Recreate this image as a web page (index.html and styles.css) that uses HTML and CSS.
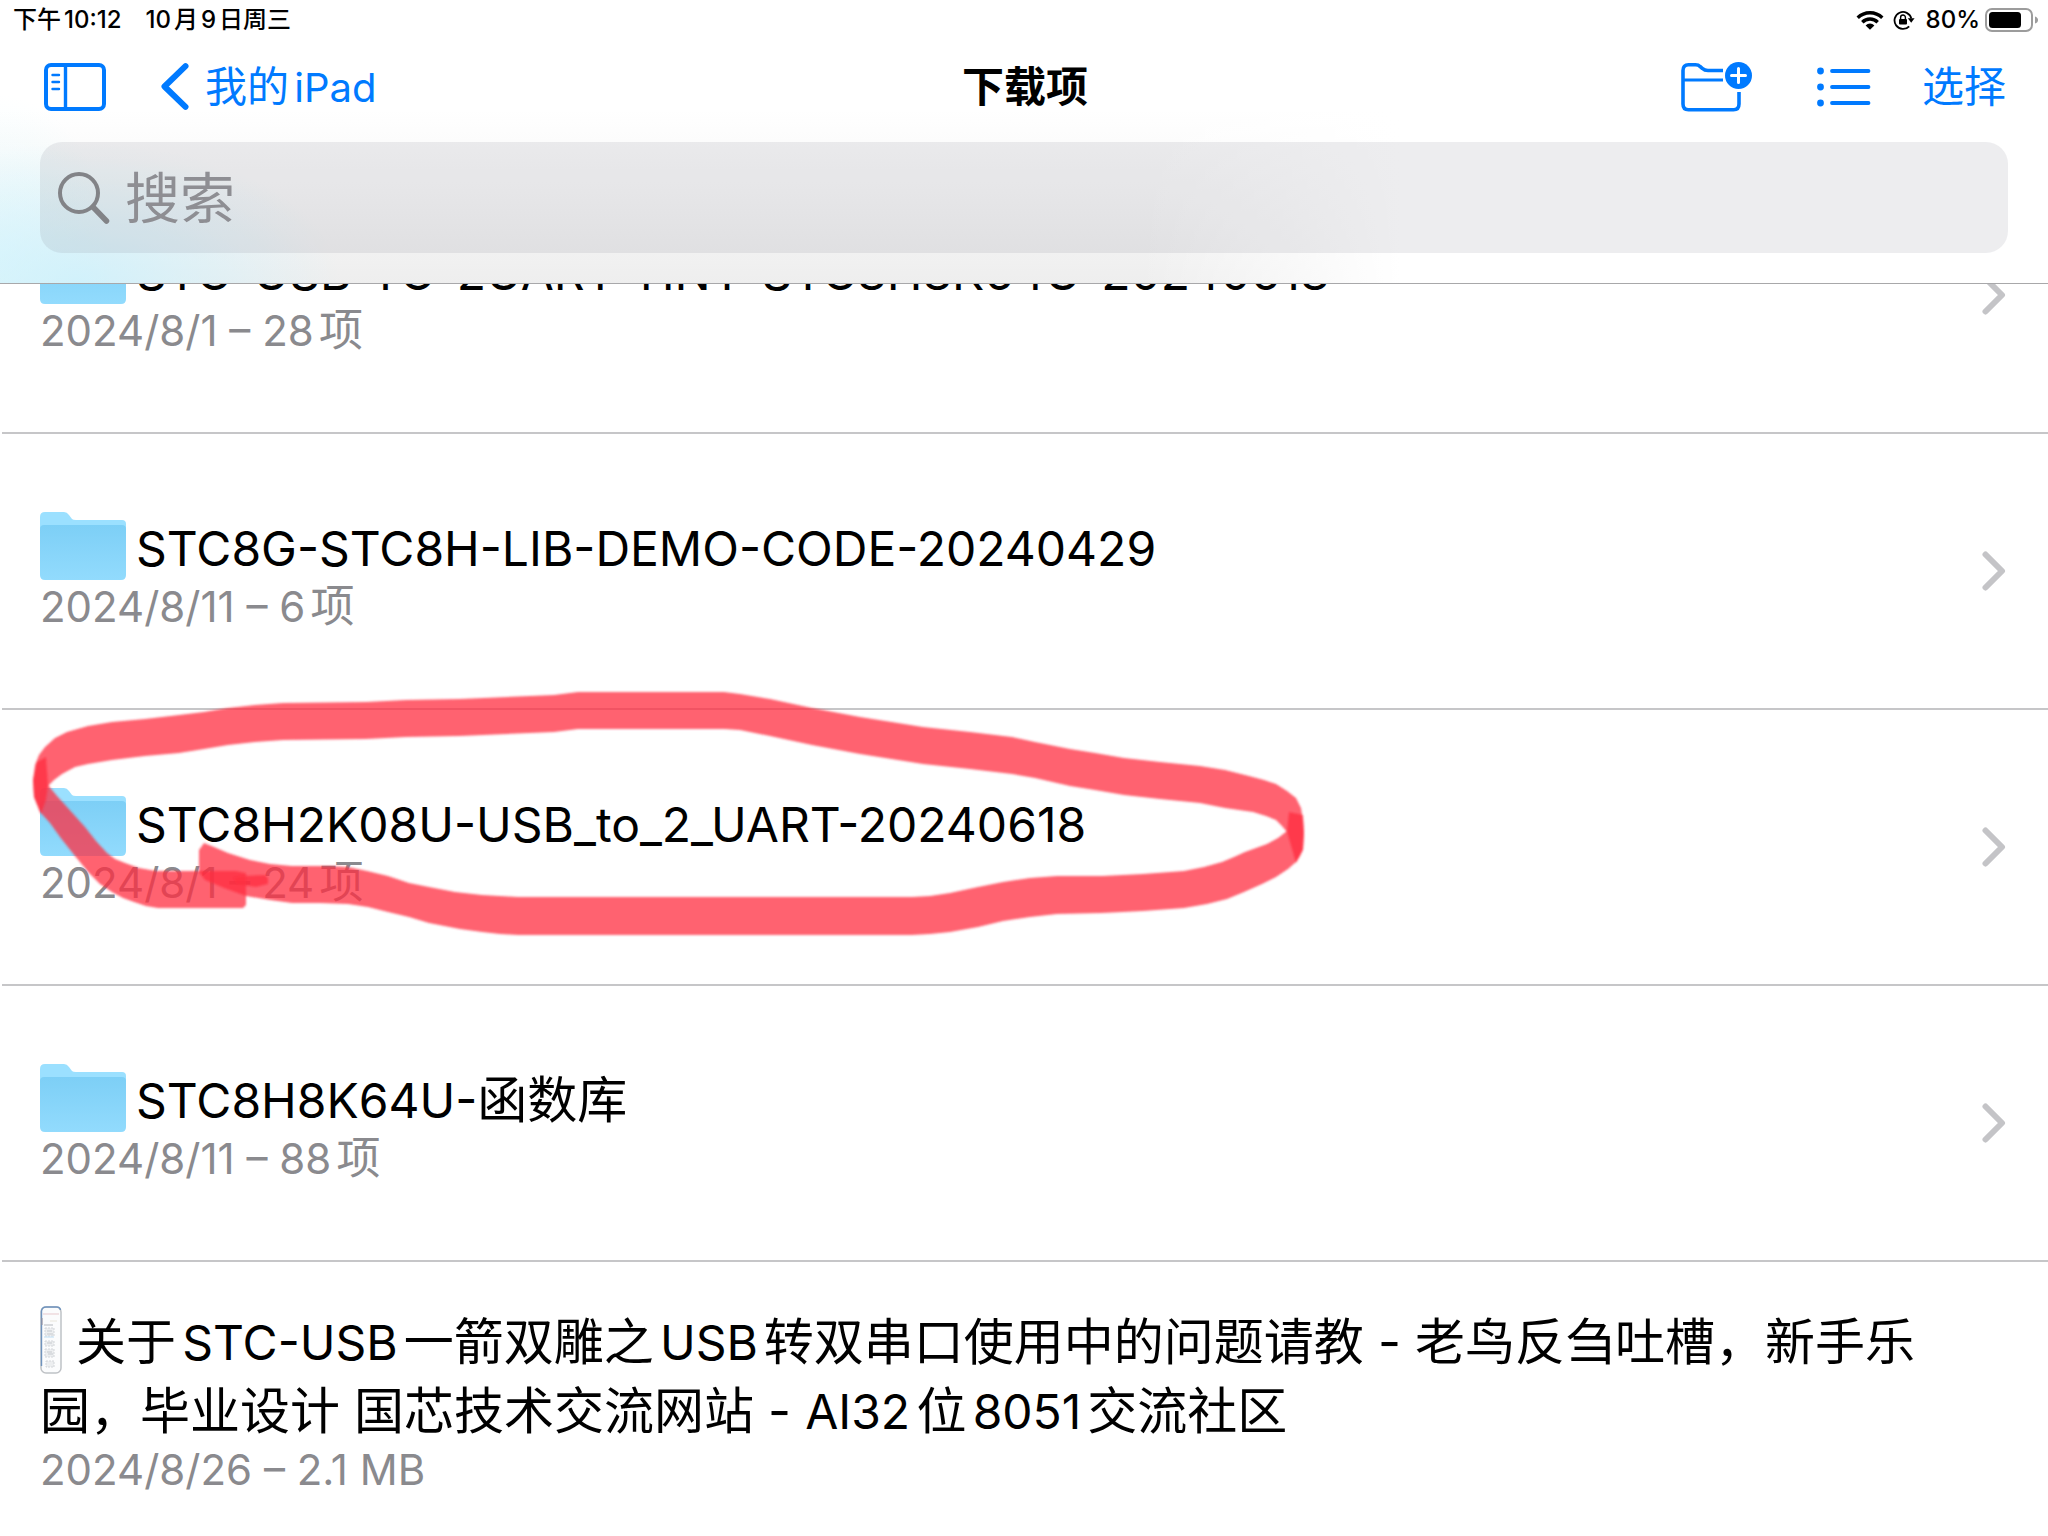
FILE: index.html
```html
<!DOCTYPE html>
<html lang="zh-CN">
<head>
<meta charset="utf-8">
<meta name="viewport" content="width=device-width, initial-scale=1">
<title>下载项</title>
<link rel="stylesheet" href="styles.css">
</head>
<body>
<svg class="symbols" aria-hidden="true">
  <defs>
    <linearGradient id="folder-front" x1="0" y1="0" x2="0" y2="1">
      <stop offset="0" stop-color="#7dcff6"/>
      <stop offset="1" stop-color="#92dbfd"/>
    </linearGradient>
    <symbol id="folder" viewBox="0 0 86 68">
      <path d="M5 0H24Q27 0 29 3L32 7Q33 8 36 8H82Q86 8 86 12V30H0V5Q0 0 5 0Z" fill="#9be0ff"/>
      <path d="M4 13H82Q86 13 86 17V63Q86 68 81 68H5Q0 68 0 63V17Q0 13 4 13Z" fill="url(#folder-front)"/>
    </symbol>
    <symbol id="chevron" viewBox="0 0 24 40">
      <path d="M3.500 3.500L20 20L3.500 36.500" fill="none" stroke="#c4c4c7" stroke-width="6" stroke-linecap="round" stroke-linejoin="round"/>
    </symbol>
  </defs>
</svg>

<header class="topbar">
  <div class="status">
    <div class="status-left"><span>下午10:12</span><span>10月9日周三</span></div>
    <div class="status-right">
      <svg width="28" height="20" viewBox="0 0 28 20" aria-hidden="true">
        <g fill="none" stroke="#000" stroke-width="3.400">
          <path d="M1.700 7.800A17.500 17.500 0 0 1 26.300 7.800"/>
          <path d="M6.300 12.200A11 11 0 0 1 21.700 12.200"/>
        </g>
        <path d="M14 19.800L9.600 15.400A6.300 6.300 0 0 1 18.400 15.400Z"/>
      </svg>
      <svg class="lock" width="22" height="20" viewBox="0 0 22 20" aria-hidden="true">
        <path d="M16.200 16.300A8.500 8.500 0 1 1 18.300 8.500" fill="none" stroke="#000" stroke-width="1.800"/>
        <path d="M14.800 8.200H21.600L18.200 12.800Z"/>
        <rect x="6" y="9" width="8" height="5.600" rx="1"/>
        <path d="M7.600 9.500V7.400a2.400 2.400 0 0 1 4.800 0V9.500" fill="none" stroke="#000" stroke-width="1.400"/>
      </svg>
      <span>80%</span>
      <svg width="53" height="24" viewBox="0 0 53 24" aria-hidden="true">
        <rect x="1" y="1" width="46" height="22" rx="6" fill="none" stroke="#9c9c9c" stroke-width="2"/>
        <rect x="4" y="4" width="32" height="16" rx="3.500"/>
        <path d="M50 8.500Q53 9.500 53 12T50 15.500Z" fill="#9c9c9c"/>
      </svg>
    </div>
  </div>

  <nav class="nav">
    <div class="nav-side">
      <button class="icon-button" type="button" aria-label="边栏">
        <svg width="62" height="48" viewBox="0 0 62 48" fill="none" stroke="#007aff">
          <rect x="2" y="2" width="58" height="44" rx="5" stroke-width="4"/>
          <path d="M21.500 2V46" stroke-width="3.400"/>
          <path d="M8.500 12H15M8.500 19H15M8.500 26H15" stroke-width="2.400" stroke-linecap="round"/>
        </svg>
      </button>
      <a class="back" href="#">
        <svg width="28" height="47" viewBox="0 0 28 47" fill="none" stroke="#007aff" stroke-width="6" stroke-linecap="round" stroke-linejoin="round"><path d="M24.500 3.200L3.500 23.500L24.500 43.800"/></svg>
        <span>我的<span class="latin">iPad</span></span>
      </a>
    </div>
    <h1 class="title">下载项</h1>
    <div class="nav-side nav-end">
      <button class="icon-button new-folder" type="button" aria-label="新建文件夹">
        <svg width="72" height="50" viewBox="0 0 72 50" fill="none" stroke="#007aff" stroke-width="3.600">
          <path d="M42 8.500H27Q23.500 8.500 21.500 6.500L19 4.400Q17.500 2.800 14.500 2.800H7.500Q2 2.800 2 8.500V42Q2 47.800 7.500 47.800H52.500Q58 47.800 58 42V30"/>
          <path d="M2 18H42" stroke-width="3"/>
          <circle cx="57.500" cy="13.500" r="13.500" fill="#007aff" stroke="none"/>
          <path d="M57.500 6.500V20.500M50.500 13.500H64.500" stroke="#fff" stroke-width="3" stroke-linecap="round"/>
        </svg>
      </button>
      <button class="icon-button list-view" type="button" aria-label="列表">
        <svg width="54" height="40" viewBox="0 0 54 40">
          <g fill="#007aff"><circle cx="3.500" cy="4" r="3.400"/><circle cx="3.500" cy="20" r="3.400"/><circle cx="3.500" cy="36" r="3.400"/></g>
          <path d="M15 4H51.500M15 20H51.500M15 36H51.500" stroke="#007aff" stroke-width="3.800" stroke-linecap="round"/>
        </svg>
      </button>
      <button class="text-button" type="button">选择</button>
    </div>
  </nav>

  <form class="search" role="search">
    <svg width="52" height="52" viewBox="0 0 52 52" fill="none" stroke="#828387" aria-hidden="true">
      <circle cx="21" cy="21" r="19" stroke-width="4"/>
      <path d="M35 35L48.500 49" stroke-width="5.500" stroke-linecap="round"/>
    </svg>
    <input type="search" placeholder="搜索" aria-label="搜索">
  </form>
</header>

<main>
  <ul class="files">
    <li class="row">
      <a class="entry" href="#">
        <span class="info">
          <span class="name"><svg class="thumb" width="86" height="68"><use href="#folder"/></svg><span class="latin">STC-USB-TO-2UART-TINY-STC8H8K64U-20240618</span></span>
          <span class="meta"><span class="latin">2024/8/1 – 28</span>项</span>
        </span>
        <svg class="chevron" width="24" height="40"><use href="#chevron"/></svg>
      </a>
    </li>
    <li class="row">
      <a class="entry" href="#">
        <span class="info">
          <span class="name"><svg class="thumb" width="86" height="68"><use href="#folder"/></svg><span class="latin">STC8G-STC8H-LIB-DEMO-CODE-20240429</span></span>
          <span class="meta"><span class="latin">2024/8/11 – 6</span>项</span>
        </span>
        <svg class="chevron" width="24" height="40"><use href="#chevron"/></svg>
      </a>
    </li>
    <li class="row">
      <a class="entry" href="#">
        <span class="info">
          <span class="name"><svg class="thumb" width="86" height="68"><use href="#folder"/></svg><span class="latin">STC8H2K08U-USB_to_2_UART-20240618</span></span>
          <span class="meta"><span class="latin">2024/8/1 – 24</span>项</span>
        </span>
        <svg class="chevron" width="24" height="40"><use href="#chevron"/></svg>
      </a>
      <svg class="marker" width="1320" height="260" viewBox="0 680 1320 260" aria-hidden="true">
        <defs>
          <filter id="soft-edge" x="-2%" y="-5%" width="104%" height="110%"><feGaussianBlur stdDeviation="1"/></filter>
        </defs>
        <g fill="#ff2f40" fill-opacity=".75" filter="url(#soft-edge)">
          <path d="M41 814L34 797L33 780L35 765L39 755L45 747L55 738L67 732L88 726L112 722L145 719L179 715L204 712L228 708L255 705L283 703L366 702L406 700L460 699L554 695L578 692L724 692L740 694L770 699L812 708L860 717L923 727L970 732L1012 737L1035 742L1070 749L1095 753L1124 758L1160 762L1200 766L1225 770L1249 776L1264 780L1276 784L1287 791L1296 798L1301 808L1303 820L1304 833L1303 850L1296 863L1287 832L1282 826L1276 820L1266 816L1253 812L1225 808L1200 803L1160 799L1124 795L1095 790L1070 786L1035 778L1012 774L970 769L923 764L860 754L812 745L770 736L740 730L724 729L578 729L554 732L460 736L406 737L366 739L283 740L255 742L228 745L204 749L179 753L145 756L112 760L88 764L75 767L62 774L54 780L48 786L46 800Z"/>
          <path d="M46 757L48 785L57 796L67 807L76 817L85 827L96 841L107 853L115 859L125 863L139 868L156 871L236 871L246 873V905L243 908L158 908L146 906L134 902L123 898L112 892L100 884L89 873L75 856L60 837L50 823L40 812L34 797L33 780L37 762Z"/>
          <path d="M1289 812L1303 815L1304 833L1303 849L1300 856L1296 862L1288 869L1276 877L1262 884L1244 892L1227 899L1207 904L1184 908L1143 911L1102 913L1057 914L1030 917L1003 921L978 927L950 932L930 934L912 935L518 935L500 934L482 932L460 929L429 923L409 917L388 912L368 907L348 904L320 903L292 903L270 900L246 896L224 888L205 880L199 872L199 850L204 843L214 847L228 853L250 860L270 864L292 866L330 866L348 867L367 871L388 876L409 883L429 887L455 892L482 895L518 897L912 897L930 896L950 893L978 887L1003 882L1030 878L1057 876L1102 876L1143 874L1184 871L1204 867L1222 862L1234 857L1245 852L1267 844L1278 838L1287 831Z"/>
          <path d="M233 877L242 876L265 875L268 878V884L256 887L236 884Z"/>
        </g>
      </svg>
    </li>
    <li class="row">
      <a class="entry" href="#">
        <span class="info">
          <span class="name"><svg class="thumb" width="86" height="68"><use href="#folder"/></svg><span class="latin">STC8H8K64U-</span>函数库</span>
          <span class="meta"><span class="latin">2024/8/11 – 88</span>项</span>
        </span>
        <svg class="chevron" width="24" height="40"><use href="#chevron"/></svg>
      </a>
    </li>
    <li class="row">
      <a class="entry" href="#">
        <span class="info">
          <span class="name"><svg class="thumb thumb-doc" width="22" height="68" viewBox="0 0 22 68"><rect x="1" y="1" width="20" height="66" rx="5" fill="#fbfcfd" stroke="#bfc2c6" stroke-width="1.500"/><path d="M1.500 60V5Q2 1 6 1H17Q20 1 20.500 4" fill="none" stroke="#6f93bd" stroke-width="1.400"/><path d="M3 8H19" stroke="#e7c9cd"/><path d="M2 12V19" stroke="#9a8f98"/><path d="M10 15H17" stroke="#e9e6dc"/><path d="M4 19H13" stroke="#b4b8be"/><path d="M5 22H14V30H5ZM5 35H14V40H5ZM5 43H14V51H5ZM6 55H14V61H6Z" fill="#eceef0" stroke="#d3d6da" stroke-dasharray="2 1"/><path d="M7 25H12M7 28H13M7 37H12M7 46H12M8 48H13" stroke="#c6cacf"/><path d="M4 31H14" stroke="#bcdcf3"/></svg>关于<span class="latin">STC-USB</span>一箭双雕之<span class="latin">USB</span>转双串口使用中的问题请教 - 老鸟反刍吐槽，新手乐<wbr>园，毕业设计 国芯技术交流网站 - <span class="latin">AI32</span>位<span class="latin">8051</span>交流社区</span>
          <span class="meta"><span class="latin">2024/8/26 – 2.1 MB</span></span>
        </span>
      </a>
    </li>
  </ul>
</main>
</body>
</html>
```
FILE: styles.css
```css
* {
  box-sizing: border-box;
}

body {
  margin: 0;
  min-height: 100vh;
  overflow: hidden;
  background: #fff;
  color: #000;
  font-family: Inter, "Noto Sans CJK SC", sans-serif;
  line-height: 1.2;
  text-autospace: normal;
}

svg {
  display: block;
  flex: none;
}

button {
  padding: 0;
  border: 0;
  background: none;
  font: inherit;
  color: #007aff;
}

a {
  color: inherit;
  text-decoration: none;
}

.symbols {
  position: absolute;
  width: 0;
  height: 0;
}

/* Top bar: status line, navigation, search */
.topbar {
  position: sticky;
  top: 0;
  z-index: 2;
  padding-bottom: 30px;
  border-bottom: 1px solid #a8a8aa;
  background:
    radial-gradient(ellipse 260px 140px at 80px 100%, rgba(200, 242, 255, .75), rgba(200, 242, 255, 0)),
    radial-gradient(ellipse 110px 160px at 0 90%, rgba(222, 250, 255, .6), rgba(222, 250, 255, 0)),
    linear-gradient(to right, rgba(255, 255, 255, 0) 1140px, #fff 1400px),
    linear-gradient(to bottom, #fff 110px, #eee 100%);
}

.status {
  display: flex;
  justify-content: space-between;
  align-items: center;
  height: 40px;
  padding: 0 10px 0 13px;
  font-size: 24px;
  font-weight: 500;
}

.status-left {
  display: flex;
  gap: 24px;
}

.status-right {
  display: flex;
  align-items: center;
  gap: 5px;
}

.lock {
  margin: 0 6px 0 4px;
}

.nav {
  display: grid;
  grid-template-columns: 1fr auto 1fr;
  align-items: center;
  height: 94px;
  padding: 0 42px 0 44px;
  color: #007aff;
  font-size: 42px;
}

.nav .latin {
  font-size: 40px;
}

.nav-side {
  display: flex;
  align-items: center;
}

.nav-end {
  justify-content: flex-end;
}

.back {
  display: flex;
  align-items: center;
  gap: 16px;
  margin-left: 55px;
}

.title {
  margin: 0;
  color: #000;
  font-size: 42px;
  font-weight: 600;
}

.new-folder {
  margin-right: 64px;
}

.list-view {
  margin-right: 51px;
}

.search {
  display: flex;
  align-items: center;
  gap: 15px;
  height: 111px;
  margin: 8px 40px 0;
  padding: 0 18px;
  border-radius: 22px;
  background: rgba(118, 118, 128, .13);
}

.search input {
  flex: 1;
  min-width: 0;
  padding: 0;
  border: 0;
  outline: 0;
  background: none;
  font: inherit;
  font-size: 55px;
}

.search input::placeholder {
  color: #8e8e93;
  opacity: 1;
}

/* File list, scrolled so the first row sits partly under the top bar */
.files {
  margin: -126px 0 0;
  padding: 0;
  list-style: none;
}

.row {
  position: relative;
}

.entry {
  display: flex;
  align-items: center;
  min-height: 276px;
  margin-left: 2px;
  padding: 0 42px 0 38px;
  border-bottom: 2px solid #c6c6c8;
}

.info {
  flex: 1;
  padding-right: 59px;
}

.name {
  display: block;
  font-size: 50px;
  line-height: 68px;
}

.name .latin {
  font-size: 48px;
}

.thumb {
  display: inline-block;
  margin-right: 10px;
  vertical-align: -14px;
}

.thumb-doc {
  margin-right: 14px;
}

.meta {
  display: block;
  color: #8a8a8e;
  font-size: 44px;
  line-height: 47px;
}

.meta .latin {
  font-size: 42px;
}

/* Highlighter stroke drawn over the row */
.marker {
  position: absolute;
  top: -30px;
  left: 0;
  pointer-events: none;
}
```
